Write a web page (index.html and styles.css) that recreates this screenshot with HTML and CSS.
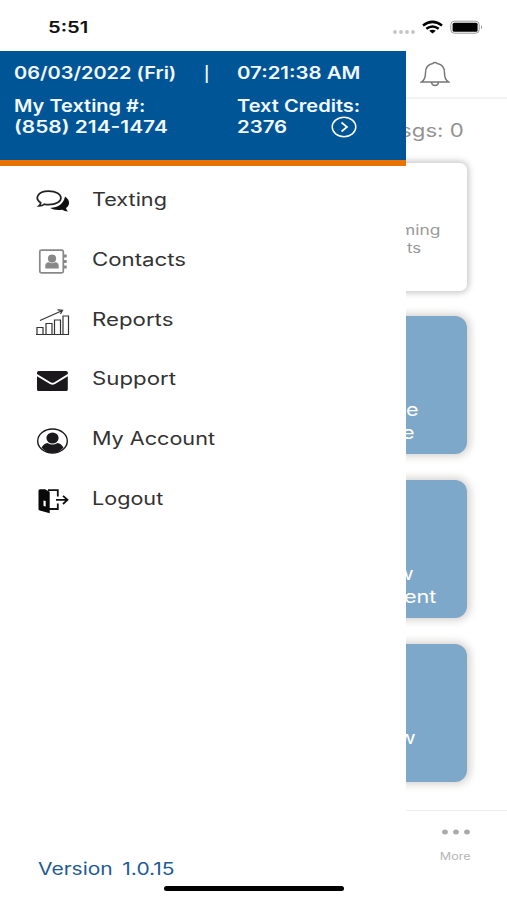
FILE: index.html
```html
<!DOCTYPE html>
<html lang="en">
<head>
<meta charset="utf-8">
<title>Menu</title>
<link rel="stylesheet" href="styles.css">
</head>
<body>
<header class="status">
  <span class="clock wide">5:51</span>
  <svg class="status-icons" width="92" height="16" viewBox="0 0 92 16">
    <g fill="#c4c4c4"><circle cx="3" cy="12" r="1.900"/><circle cx="9" cy="12" r="1.900"/><circle cx="15" cy="12" r="1.900"/><circle cx="21" cy="12" r="1.900"/></g>
    <g fill="none" stroke="#000" stroke-width="2.500"><path d="M31 5.500Q40.500 -1.800 50 5.500"/><path d="M34.300 8.800Q40.500 4.300 46.700 8.800"/></g>
    <path d="M37.200 10.800Q40.500 8.500 43.800 10.800L40.500 13.400Z"/>
    <rect x="58.800" y="1.200" width="28.400" height="12" rx="3.500" fill="none" stroke="#999"/>
    <rect x="60.600" y="2.700" width="25" height="9" rx="1.500"/>
    <path d="M89 5.200q2.400 2 0 4z" fill="#999"/>
  </svg>
</header>
<main class="screen">
  <nav class="drawer">
    <section class="account">
      <div class="info-row">
        <span class="wide date">06/03/2022 (Fri)</span>
        <span class="bar">|</span>
        <span class="wide time">07:21:38 AM</span>
      </div>
      <div class="info-row balance">
        <div class="number"><span class="wide label">My Texting #:</span><span class="wide phone">(858) 214-1474</span></div>
        <div class="credits">
          <span class="wide credit-label">Text Credits:</span>
          <div class="credit-line"><span class="wide amount">2376</span>
            <svg width="26" height="22" viewBox="0 0 26 22" fill="none" stroke="#fff"><ellipse cx="13" cy="11" rx="11.800" ry="9.700" stroke-width="1.500"/><path d="M10.500 6.500L16 11L10.500 15.500" stroke-width="1.700"/></svg>
          </div>
        </div>
      </div>
    </section>
    <ul class="menu">
      <li><svg width="34" height="28" viewBox="0 0 34 28"><path d="M29 8.500C34.500 12 34 17.500 30 20Q30.500 22.500 32 23.500Q28.500 23.300 26.200 21.700Q19 23 14 20Q27 19 29 8.500Z" fill="#111"/><path d="M4.700 14.800C-1.500 11 1 3.200 12.500 3.200C29 3.200 29 16.700 12.500 16.700Q10 16.700 8.500 16.200Q6.500 18 3 18Q4.700 16.500 4.700 14.800Z" fill="#fff" stroke="#222" stroke-width="1.700"/></svg><span class="wide">Texting</span></li>
      <li class="contacts"><svg width="34" height="28" viewBox="0 0 34 28" fill="#888"><rect x="3.800" y="2.200" width="23.500" height="22.600" rx="1.500" fill="none" stroke="#888" stroke-width="1.700"/><circle cx="16" cy="10.600" r="4.100"/><path d="M9.300 20.500V18Q9.300 14.300 13 14.300Q16 16 19 14.300Q22.700 14.300 22.700 18V20.500Z"/><path d="M28 6.500h2.700v3H28zM28 12h2.700v3H28zM28 17.500h2.700v3H28z"/></svg><span class="wide">Contacts</span></li>
      <li class="reports"><svg width="34" height="28" viewBox="0 0 34 28" fill="none" stroke="#333" stroke-width="1.200"><path d="M0 26.500H33M1 26.500V19.500H7V26.500M10 26.500V15.500H16V26.500M18.500 26.500V12H24.500V26.500M27 26.500V8H32.500V26.500"/><path d="M4 12.500L26.500 2.500M21.500 1.800L26.500 2.300L24.500 6"/></svg><span class="wide">Reports</span></li>
      <li class="support"><svg width="34" height="28" viewBox="0 0 34 28" fill="#1b191b"><path d="M1 5.500Q1 4 2.700 4H30Q31.800 4 31.800 5.500V7L18.500 15.200Q16.500 16.400 14.500 15.200L1 7Z"/><path d="M1 9.200L14 17.100Q16.500 18.500 19 17.100L31.800 9.200V22.500Q31.800 24 30 24H2.700Q1 24 1 22.500Z"/></svg><span class="wide">Support</span></li>
      <li><svg width="34" height="28" viewBox="0 0 34 28"><ellipse cx="16.500" cy="14" rx="14.800" ry="12" fill="#fff" stroke="#1b191b" stroke-width="1.400"/><ellipse cx="16.500" cy="11" rx="6.100" ry="5.500" fill="#1b191b"/><path d="M5.500 20.500Q8 16.300 11.500 16Q16.500 19 21.500 16Q25 16.300 27.500 20.500Q23 26 16.500 26Q10 26 5.500 20.500Z" fill="#1b191b"/></svg><span class="wide">My Account</span></li>
      <li><svg width="34" height="28" viewBox="0 0 34 28"><path d="M12 3.200H21.800V9.500M21.800 16.500V22H13M20 12.800H31M27 8.800L31.500 12.800L27 17" fill="none" stroke="#111" stroke-width="1.800"/><path fill-rule="evenodd" d="M4 2.200H9L13.700 4.700V26.300L3.800 23.600Q2.500 23.200 2.500 22V3.700Q2.500 2.200 4 2.200ZM7.500 13.500V19L9.700 19.500V14Z" fill="#080808"/></svg><span class="wide">Logout</span></li>
    </ul>
    <footer class="version"><span class="wide">Version 1.0.15</span></footer>
  </nav>
  <section class="page">
    <div class="topbar"><svg width="30" height="26" viewBox="0 0 30 26" fill="none" stroke="#777" stroke-width="1.500"><path d="M1.500 21H28.500Q24.500 18.500 24.500 12C24.500 6 21.500 3.200 17.300 2.500Q15 .5 12.700 2.500C8.500 3.200 5.500 6 5.500 12Q5.500 18.500 1.500 21ZM11.500 21.500Q12 24.500 15 24.500Q18 24.500 18.500 21.500"/></svg></div>
    <div class="messages"><span class="wide">sgs: 0</span></div>
    <div class="cards">
      <article class="card plain"><span class="wide first">ming</span><span class="wide second">ts</span></article>
      <article class="card two"><span class="wide">e</span><span class="wide last">e</span></article>
      <article class="card three"><span class="wide">w</span><span class="wide last">ent</span></article>
      <article class="card four"><span class="wide">w</span></article>
    </div>
    <footer class="tab"><svg width="30" height="8" viewBox="0 0 30 8" fill="#aaa"><ellipse cx="4" cy="4" rx="2.900" ry="2.500"/><ellipse cx="15" cy="4" rx="2.900" ry="2.500"/><ellipse cx="26" cy="4" rx="2.900" ry="2.500"/></svg><span class="wide">More</span></footer>
  </section>
</main>
<div class="home-indicator"></div>
</body>
</html>
```
FILE: styles.css
```css
* { box-sizing: border-box; }
body { margin: 0; width: 507px; height: 900px; overflow: hidden; position: relative; background: #fff; font-family: Inter, "Liberation Sans", sans-serif; color: #333; }
.wide { display: block; width: max-content; white-space: nowrap; transform: scaleX(var(--sx, 1.2)); transform-origin: left center; }
.status { height: 51px; padding: 17px 23px 0 48px; display: flex; justify-content: space-between; align-items: flex-start; }
.clock { font-size: 16px; line-height: 20px; font-weight: 600; color: #111; --sx: 1.26; }
.status-icons { margin-top: 3px; }
.screen { display: flex; height: 849px; }
.drawer { width: 406px; flex: none; display: flex; flex-direction: column; background: #fff; }
.account { height: 115px; padding: 12px 0 0 14px; border-bottom: 6px solid #e97300; background: #005596; color: #f2f8ff; font-size: 17px; line-height: 21px; font-weight: 600; }
.info-row { display: grid; grid-template-columns: 190px 33px 1fr; }
.balance { grid-template-columns: 223px 1fr; margin-top: 12px; }
.date { --sx: 1.175; }
.label { --sx: 1.175; }
.phone { --sx: 1.23; }
.credit-label { --sx: 1.18; }
.bar { font-size: 15px; }
.credit-line { display: flex; height: 21px; margin-top: -.5px; }
.amount { width: 94px; }
.credit-line svg { margin-top: -1px; }
.menu { list-style: none; margin: 0; padding: 4.500px 0 0 36px; }
.menu li { display: flex; align-items: center; gap: 22px; height: 59.7px; font-size: 18px; line-height: 24px; }
.menu li svg { position: relative; top: 2px; }
.contacts, .reports, .support { --sx: 1.235; }
.version { margin-top: auto; padding: 0 0 19px 38px; font-size: 17px; line-height: 24px; color: #1d5b96; word-spacing: 3px; --sx: 1.235; }
.page { flex: 1; min-width: 0; overflow: hidden; display: flex; flex-direction: column; }
.topbar { height: 48px; flex: none; padding: 10px 0 0 14px; border-bottom: 2px solid #f3f3f3; }
.messages { height: 64px; flex: none; display: flex; justify-content: flex-end; padding: 20px 43px 0 0; color: #929292; font-size: 18px; line-height: 24px; }
.messages .wide { transform-origin: right center; --sx: 1.23; }
.cards { display: flex; flex-direction: column; gap: 26px; flex: none; }
.card { width: 81px; height: 138px; margin-left: -20px; padding: 83px 0 0 20px; border-radius: 12px; background: #7da8c9; color: #fff; font-size: 18px; line-height: 22.5px; box-shadow: 1px 0 8px 2px #d3d0ce; }
.plain { height: 128px; border-radius: 7px; margin-bottom: -1px; padding-top: 58px; background: #fff; color: #999; font-size: 14px; line-height: 18px; box-shadow: 0 0 6px 2px #c8c8c8; }
.plain .first { margin-left: -6px; --sx: 1.24; }
.plain .second { margin-left: 1px; }
.two .last { margin-left: -4px; }
.three .wide { margin-left: -10px; }
.three .last { margin-left: -2px; }
.four .wide { margin-left: -8px; }
.tab { margin-top: 28px; border-top: 1px solid #eee; height: 90px; display: flex; flex-direction: column; align-items: center; padding: 17px 2px 0 0; gap: 12px; font-size: 10px; line-height: 16px; color: #b5b5b5; }
.tab .wide { transform-origin: center; --sx: 1.26; }
.home-indicator { position: absolute; left: 164px; bottom: 9px; width: 180px; height: 5px; border-radius: 3px; background: #000; }
```
